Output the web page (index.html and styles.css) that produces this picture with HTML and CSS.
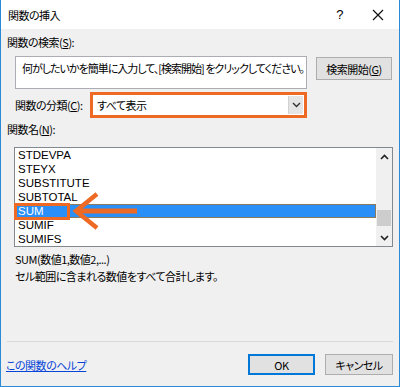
FILE: index.html
```html
<!DOCTYPE html>
<html lang="ja">
<head>
<meta charset="utf-8">
<link rel="stylesheet" href="styles.css">
</head>
<body>
<div class="window">
  <div class="titlebar">
    <span class="title">関数の挿入</span>
    <span class="help">?</span>
    <svg class="close" width="12" height="12" viewBox="0 0 12 12"><path d="M1 1L11 11M11 1L1 11" stroke="#111" stroke-width="1.2" fill="none"/></svg>
  </div>
  <div class="content">
    <div class="label">関数の検索(<u>S</u>):</div>
    <div class="search-row">
      <div class="textbox">何がしたいかを簡単に入力して、[検索開始] をクリックしてください。</div>
      <div class="btn search-btn">検索開始(<u>G</u>)</div>
    </div>
    <div class="cat-row">
      <div class="cat-label">関数の分類(<u>C</u>):</div>
      <div class="select">
        <span class="select-text">すべて表示</span>
        <span class="drop">
          <svg width="9" height="6" viewBox="0 0 9 6"><path d="M1 1L4.5 4.5L8 1" stroke="#333" stroke-width="1.4" fill="none"/></svg>
        </span>
      </div>
    </div>
    <div class="label name-label">関数名(<u>N</u>):</div>
    <div class="listbox">
      <ul class="items">
        <li>STDEVPA</li>
        <li>STEYX</li>
        <li>SUBSTITUTE</li>
        <li>SUBTOTAL</li>
        <li class="selected">SUM</li>
        <li>SUMIF</li>
        <li>SUMIFS</li>
      </ul>
      <div class="scrollbar">
        <svg class="arrow" width="9" height="6" viewBox="0 0 9 6"><path d="M1 5L4.5 1.5L8 5" stroke="#222" stroke-width="1.6" fill="none"/></svg>
        <div class="track"><div class="thumb"></div></div>
        <svg class="arrow" width="9" height="6" viewBox="0 0 9 6"><path d="M1 1L4.5 4.5L8 1" stroke="#222" stroke-width="1.6" fill="none"/></svg>
      </div>
      <div class="mark"></div>
      <svg class="pointer" width="70" height="40" viewBox="0 0 70 40">
        <path d="M25 2L4 19L25 36" stroke="#ee6a24" stroke-width="4.5" fill="none"/>
        <path d="M6 19H65" stroke="#ee6a24" stroke-width="5" fill="none"/>
      </svg>
    </div>
    <div class="desc">
      <div class="syntax">SUM(数値1,数値2,...)</div>
      <div>セル範囲に含まれる数値をすべて合計します。</div>
    </div>
  </div>
  <div class="footer">
    <div class="sep"></div>
    <div class="footer-row">
      <a class="help-link" href="#">この関数のヘルプ</a>
      <div class="buttons">
        <div class="btn ok">OK</div>
        <div class="btn cancel">キャンセル</div>
      </div>
    </div>
  </div>
</div>
</body>
</html>
```
FILE: styles.css
```css
* { box-sizing: border-box; }
html, body { margin: 0; padding: 0; background: #f0f0f0; }
body {
  font-family: "Noto Sans CJK JP", "Noto Sans", sans-serif;
  font-size: 11px;
  letter-spacing: -0.5px;
  font-feature-settings: "palt";
  color: #000;
}
u { text-decoration: underline; text-underline-offset: 1px; }
.window {
  width: 400px;
  height: 387px;
  border: 1px solid #2b8ad8;
  border-top: none;
  background: #f0f0f0;
  display: flex;
  flex-direction: column;
}
.titlebar {
  height: 29px;
  background: #fff;
  display: flex;
  align-items: center;
  padding-left: 7px;
  flex: none;
}
.title { flex: 1; padding-top: 1px; }
.help { font-family: "Liberation Sans", sans-serif; font-size: 13px; margin-right: 29px; }
.close { margin-right: 15px; }
.content { padding: 5px 6px 0 6px; }
.label { line-height: 16px; height: 16px; white-space: nowrap; }
.search-row { display: flex; margin-top: 6px; align-items: flex-start; }
.textbox {
  margin-left: 8px;
  width: 292px;
  height: 33px;
  flex: none;
  background: #fff;
  border: 1px solid #abadb3;
  padding: 3px 0 0 6px;
  line-height: 16px;
  white-space: nowrap;
  overflow: hidden;
  letter-spacing: -1px;
}
.btn {
  background: #e1e1e1;
  border: 1px solid #adadad;
  display: flex;
  align-items: center;
  justify-content: center;
  white-space: nowrap;
  flex: none;
}
.search-btn { margin-left: 9px; margin-top: 1px; width: 76px; height: 23px; }
.cat-row { display: flex; align-items: center; margin-top: 3px; }
.cat-label { margin-left: 8px; width: 75px; flex: none; white-space: nowrap; }
.select {
  width: 217px;
  height: 26px;
  flex: none;
  border: 3px solid #ee6a24;
  background: #fff;
  display: flex;
  align-items: center;
  padding: 0 0 0 4px;
}
.select-text { flex: 1; }
.drop {
  width: 15px;
  height: 18px;
  margin-right: 1px;
  background: #e5e5e5;
  border-left: 1px solid #d0d0d0;
  display: flex;
  align-items: center;
  justify-content: center;
}
.name-label { margin-top: 3px; }
.listbox {
  position: relative;
  margin-top: 10px;
  margin-left: 7px;
  width: 379px;
  height: 100px;
  background: #fff;
  border: 1px solid #828790;
  display: flex;
}
.items {
  list-style: none;
  margin: 0;
  padding: 0;
  flex: 1;
  font-family: "Liberation Sans", sans-serif;
  font-size: 11.5px;
  letter-spacing: 0;
}
.items li { height: 14px; line-height: 14px; padding-left: 3px; }
.items li.selected { background: #2a8ff7; color: #fff; box-shadow: inset 0 0 0 1px #8c7a5c; }
.scrollbar {
  width: 16px;
  background: #f0f0f0;
  display: flex;
  flex-direction: column;
  align-items: center;
  padding: 6px 0 5px;
}
.track { flex: 1; width: 100%; position: relative; }
.thumb { position: absolute; left: 1px; right: 1px; top: 50px; height: 16px; background: #cdcdcd; }
.mark {
  position: absolute;
  left: -1px;
  top: 55px;
  width: 56px;
  height: 17px;
  border: 3px solid #ee6a24;
}
.pointer { position: absolute; left: 57px; top: 44px; }
.desc { margin-top: 4px; margin-left: 8px; line-height: 17px; }
.footer { margin-top: auto; flex: none; }
.sep { height: 1px; background: #d9d9d9; margin: 0 6px; }
.footer-row {
  display: flex;
  align-items: center;
  justify-content: space-between;
  margin-top: 12px;
  padding: 0 6px 11px 5px;
}
.help-link { color: #0645d8; text-decoration: underline; }
.buttons { display: flex; gap: 10px; }
.ok { width: 67px; height: 21px; border: 2px solid #0078d7; }
.cancel { width: 68px; height: 21px; }
```
